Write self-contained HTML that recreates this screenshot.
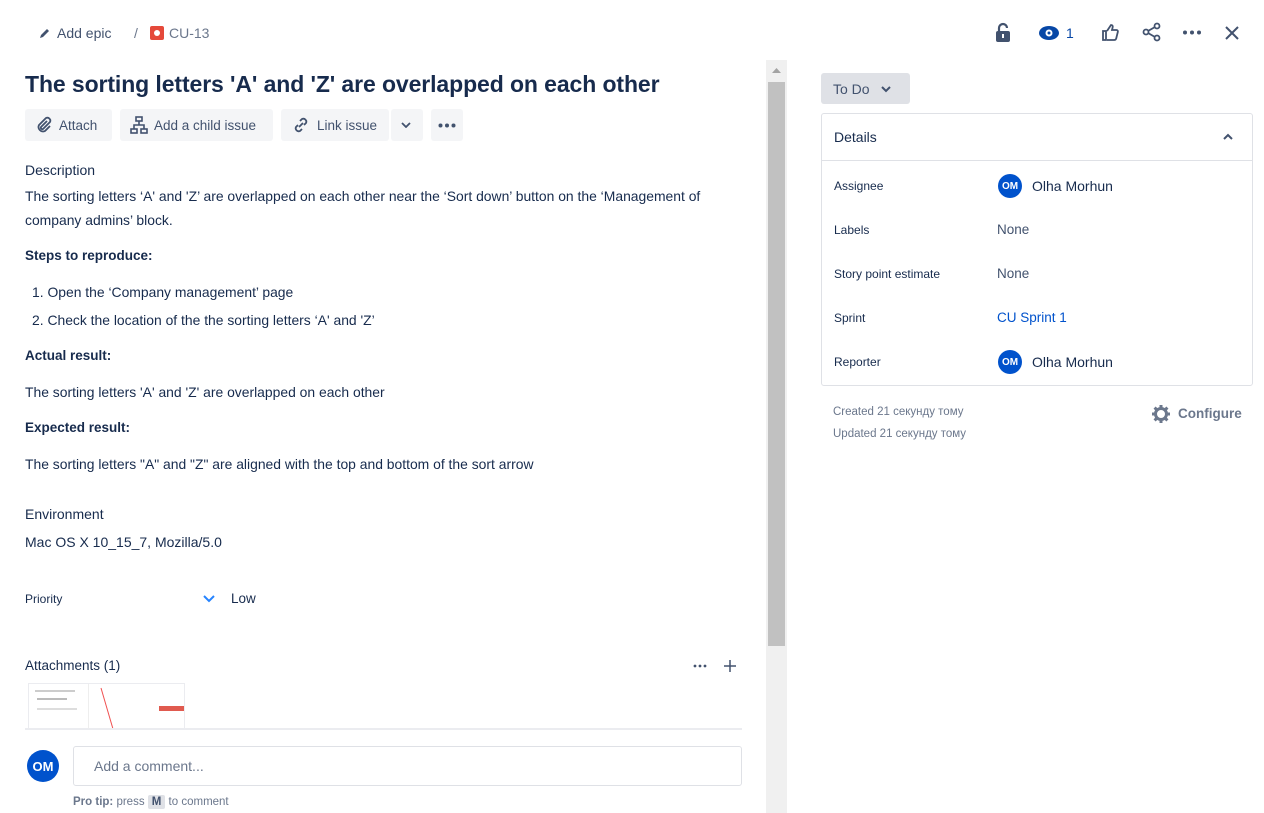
<!DOCTYPE html>
<html><head><meta charset="utf-8"><style>
*{box-sizing:border-box;margin:0;padding:0}
body{width:1264px;height:813px;overflow:hidden;background:#fff;font-family:"Liberation Sans",sans-serif;color:#172b4d;position:relative;font-size:13.9px}
.a{position:absolute;white-space:nowrap}
.btn{position:absolute;top:109px;height:32px;background:#f4f5f7;border-radius:3px;font-size:13.5px;color:#42526e;display:flex;align-items:center;padding-left:10px;gap:6px}
.b{font-weight:bold;font-size:13.5px}
.lbl{font-size:12px;color:#172b4d}
.av{position:absolute;width:24px;height:24px;border-radius:50%;background:#0052cc;color:#fff;font-size:10px;font-weight:bold;display:flex;align-items:center;justify-content:center}
</style></head><body>
<svg class="a" style="left:39px;top:27px" width="12" height="12" viewBox="0 0 12 12"><path d="M1 11l1-3 6-6 2 2-6 6z" fill="#42526e"/></svg>
<div class="a" style="left:57px;top:25px;font-size:14px;color:#42526e">Add epic</div>
<div class="a" style="left:134px;top:25px;font-size:14px;color:#6b778c">/</div>
<div class="a" style="left:150px;top:26px;width:14px;height:14px;background:#e5493a;border-radius:2px"><div style="position:absolute;left:4px;top:4px;width:6px;height:6px;background:#fff;border-radius:50%"></div></div>
<div class="a" style="left:169px;top:25px;font-size:14px;color:#6b778c">CU-13</div>
<svg class="a" style="left:994px;top:22px" width="18" height="20" viewBox="0 0 18 20"><path d="M5 9V6a4 4 0 0 1 8 0" stroke="#42526e" stroke-width="2.2" fill="none"/><rect x="2" y="9" width="14" height="11" rx="2" fill="#42526e"/><rect x="8" y="12" width="2" height="4" fill="#fff"/></svg>
<svg class="a" style="left:1038px;top:25px" width="22" height="16" viewBox="0 0 22 16"><ellipse cx="11" cy="8" rx="10" ry="7" fill="#0747a6"/><circle cx="11" cy="8" r="3.5" fill="#fff"/><circle cx="11" cy="8" r="1.5" fill="#0747a6"/></svg>
<div class="a" style="left:1066px;top:25px;font-size:14px;color:#0747a6">1</div>
<svg class="a" style="left:1101px;top:23px" width="18" height="18" viewBox="0 0 18 18"><path d="M2 8h3v9H2zM6 8l4-6c1.5 0 2 1 1.6 2.5L11 7h4.5c1 0 1.6 1 1.3 2l-1.6 6.5c-.3 1-1 1.5-2 1.5H6" fill="none" stroke="#42526e" stroke-width="1.8"/></svg>
<svg class="a" style="left:1142px;top:22px" width="20" height="20" viewBox="0 0 20 20"><circle cx="15" cy="4" r="2.5" fill="none" stroke="#42526e" stroke-width="1.8"/><circle cx="4" cy="10" r="2.5" fill="none" stroke="#42526e" stroke-width="1.8"/><circle cx="15" cy="16" r="2.5" fill="none" stroke="#42526e" stroke-width="1.8"/><path d="M6 9l7-4M6 11l7 4" stroke="#42526e" stroke-width="1.8"/></svg>
<svg class="a" style="left:1182px;top:30px" width="20" height="5"><circle cx="3" cy="2.5" r="2" fill="#42526e"/><circle cx="10" cy="2.5" r="2" fill="#42526e"/><circle cx="17" cy="2.5" r="2" fill="#42526e"/></svg>
<svg class="a" style="left:1224px;top:25px" width="16" height="16"><path d="M2 2l12 12M14 2L2 14" stroke="#42526e" stroke-width="2"/></svg>
<div class="a" style="left:25px;top:71px;font-size:23px;font-weight:bold;color:#172b4d;letter-spacing:-0.1px">The sorting letters 'A' and 'Z' are overlapped on each other</div>
<div class="btn" style="left:25px;width:87px"><svg width="18" height="18" viewBox="0 0 18 18"><path d="M12 5l-6 6a1.5 1.5 0 0 0 2 2l7-7a3 3 0 0 0-4-4L4 9a4.5 4.5 0 0 0 6 6l5-5" fill="none" stroke="#42526e" stroke-width="1.8"/></svg>Attach</div>
<div class="btn" style="left:120px;width:153px"><svg width="18" height="18" viewBox="0 0 18 18"><rect x="6" y="1" width="6" height="4" fill="none" stroke="#42526e" stroke-width="1.6"/><rect x="1" y="13" width="6" height="4" fill="none" stroke="#42526e" stroke-width="1.6"/><rect x="11" y="13" width="6" height="4" fill="none" stroke="#42526e" stroke-width="1.6"/><path d="M9 5v4M4 13V9h10v4" fill="none" stroke="#42526e" stroke-width="1.6"/></svg>Add a child issue</div>
<div class="btn" style="left:281px;width:108px"><svg width="20" height="18" viewBox="0 0 20 18"><path d="M8 11l4-4M9 5l2-2a3 3 0 0 1 4 4l-2 2M11 13l-2 2a3 3 0 0 1-4-4l2-2" fill="none" stroke="#42526e" stroke-width="1.8"/></svg>Link issue</div>
<div class="btn" style="left:391px;width:32px;padding-left:10px"><svg width="10" height="6"><path d="M1 1l4 4 4-4" fill="none" stroke="#42526e" stroke-width="1.8"/></svg></div>
<div class="btn" style="left:431px;width:32px;padding-left:7px"><svg width="18" height="5"><circle cx="2.5" cy="2.5" r="2" fill="#42526e"/><circle cx="9" cy="2.5" r="2" fill="#42526e"/><circle cx="15.5" cy="2.5" r="2" fill="#42526e"/></svg></div>
<div class="a" style="left:25px;top:162px;font-size:14px;color:#172b4d">Description</div>
<div class="a" style="left:25px;top:188px">The sorting letters ‘A' and 'Z’ are overlapped on each other near the ‘Sort down’ button on the ‘Management of</div>
<div class="a" style="left:25px;top:212px">company admins’ block.</div>
<div class="a b" style="left:25px;top:248px">Steps to reproduce:</div>
<div class="a" style="left:32px;top:284px">1. Open the ‘Company management’ page</div>
<div class="a" style="left:32px;top:312px">2. Check the location of the the sorting letters ‘A' and 'Z’</div>
<div class="a b" style="left:25px;top:348px">Actual result:</div>
<div class="a" style="left:25px;top:384px">The sorting letters 'A' and 'Z' are overlapped on each other</div>
<div class="a b" style="left:25px;top:420px">Expected result:</div>
<div class="a" style="left:25px;top:456px">The sorting letters "A" and "Z" are aligned with the top and bottom of the sort arrow</div>
<div class="a" style="left:25px;top:506px;font-size:14px">Environment</div>
<div class="a" style="left:25px;top:534px;font-size:14px">Mac OS X 10_15_7, Mozilla/5.0</div>
<div class="a lbl" style="left:25px;top:592px">Priority</div>
<svg class="a" style="left:203px;top:595px" width="12" height="8"><path d="M1 1l5 5 5-5" fill="none" stroke="#2684ff" stroke-width="2"/></svg>
<div class="a" style="left:231px;top:591px;font-size:13.5px">Low</div>
<div class="a" style="left:25px;top:658px;font-size:13.5px;color:#172b4d">Attachments (1)</div>
<svg class="a" style="left:693px;top:664px" width="14" height="4"><circle cx="2" cy="2" r="1.4" fill="#42526e"/><circle cx="7" cy="2" r="1.4" fill="#42526e"/><circle cx="12" cy="2" r="1.4" fill="#42526e"/></svg>
<svg class="a" style="left:723px;top:659px" width="14" height="14"><path d="M7 1v12M1 7h12" stroke="#42526e" stroke-width="1.5"/></svg>
<div class="a" style="left:28px;top:683px;width:157px;height:45px;border:1px solid #ebecf0;border-bottom:none;overflow:hidden;background:#fff">
 <div style="position:absolute;left:0;top:0;width:60px;height:45px;border-right:1px solid #eee"></div>
 <div style="position:absolute;left:6px;top:6px;width:40px;height:2px;background:#ccc"></div>
 <div style="position:absolute;left:8px;top:14px;width:30px;height:2px;background:#bbb"></div>
 <div style="position:absolute;left:8px;top:24px;width:40px;height:2px;background:#ddd"></div>
 <div style="position:absolute;left:130px;top:22px;width:26px;height:5px;background:#e05a4f"></div>
 <svg style="position:absolute;left:70px;top:0" width="20" height="45"><path d="M2 4l12 41" stroke="#f05050" stroke-width="1"/></svg>
</div>
<div class="a" style="left:25px;top:728px;width:717px;height:2px;background:#ebecf0"></div>
<div class="av" style="left:27px;top:750px;width:32px;height:32px;font-size:13px">OM</div>
<div class="a" style="left:73px;top:746px;width:669px;height:40px;border:1px solid #dfe1e6;border-radius:3px"></div>
<div class="a" style="left:94px;top:758px;font-size:14px;color:#6b778c">Add a comment...</div>
<div class="a" style="left:73px;top:796px;font-size:11.5px;color:#6b778c"><b>Pro tip:</b> press <span style="background:#dfe1e6;padding:1px 4px;border-radius:2px;font-weight:bold;color:#42526e">M</span> to comment</div>
<div class="a" style="left:766px;top:60px;width:21px;height:753px;background:#f0f0f0"></div>
<div class="a" style="left:768px;top:82px;width:17px;height:564px;background:#c1c1c1"></div>
<svg class="a" style="left:772px;top:68px" width="9" height="5"><path d="M0 5l4.5-5 4.5 5z" fill="#a3a3a3"/></svg>
<div class="a" style="left:821px;top:73px;width:89px;height:31px;background:#dfe1e6;border-radius:3px"></div>
<div class="a" style="left:833px;top:81px;font-size:14px;color:#42526e">To Do</div>
<svg class="a" style="left:881px;top:86px" width="10" height="7"><path d="M1 1l4 4 4-4" fill="none" stroke="#42526e" stroke-width="2"/></svg>
<div class="a" style="left:821px;top:113px;width:432px;height:273px;border:1px solid #dfe1e6;border-radius:3px"></div>
<div class="a" style="left:822px;top:160px;width:430px;height:1px;background:#dfe1e6"></div>
<div class="a" style="left:834px;top:129px;font-size:14px;color:#172b4d">Details</div>
<svg class="a" style="left:1223px;top:133px" width="10" height="7"><path d="M1 6l4-4 4 4" fill="none" stroke="#42526e" stroke-width="2"/></svg>
<div class="a lbl" style="left:834px;top:179px">Assignee</div>
<div class="av" style="left:998px;top:174px">OM</div>
<div class="a" style="left:1032px;top:178px;font-size:14px">Olha Morhun</div>
<div class="a lbl" style="left:834px;top:223px">Labels</div>
<div class="a" style="left:997px;top:222px;font-size:13.5px;color:#42526e">None</div>
<div class="a lbl" style="left:834px;top:267px">Story point estimate</div>
<div class="a" style="left:997px;top:266px;font-size:13.5px;color:#42526e">None</div>
<div class="a lbl" style="left:834px;top:311px">Sprint</div>
<div class="a" style="left:997px;top:310px;font-size:13.5px;color:#0052cc">CU Sprint 1</div>
<div class="a lbl" style="left:834px;top:355px">Reporter</div>
<div class="av" style="left:998px;top:350px">OM</div>
<div class="a" style="left:1032px;top:354px;font-size:14px">Olha Morhun</div>
<div class="a" style="left:833px;top:406px;font-size:11.5px;color:#6b778c">Created 21 секунду тому</div>
<div class="a" style="left:833px;top:428px;font-size:11.5px;color:#6b778c">Updated 21 секунду тому</div>
<svg class="a" style="left:1152px;top:405px" width="18" height="18" viewBox="0 0 18 18"><circle cx="9" cy="9" r="5.5" fill="none" stroke="#6b778c" stroke-width="3"/><g stroke="#6b778c" stroke-width="3"><path d="M9 0v4M9 14v4M0 9h4M14 9h4M2.6 2.6l2.8 2.8M12.6 12.6l2.8 2.8M2.6 15.4l2.8-2.8M12.6 5.4l2.8-2.8"/></g><circle cx="9" cy="9" r="2.5" fill="#fff"/></svg>
<div class="a" style="left:1178px;top:406px;font-size:13.5px;color:#6b778c;font-weight:bold">Configure</div>
</body></html>
